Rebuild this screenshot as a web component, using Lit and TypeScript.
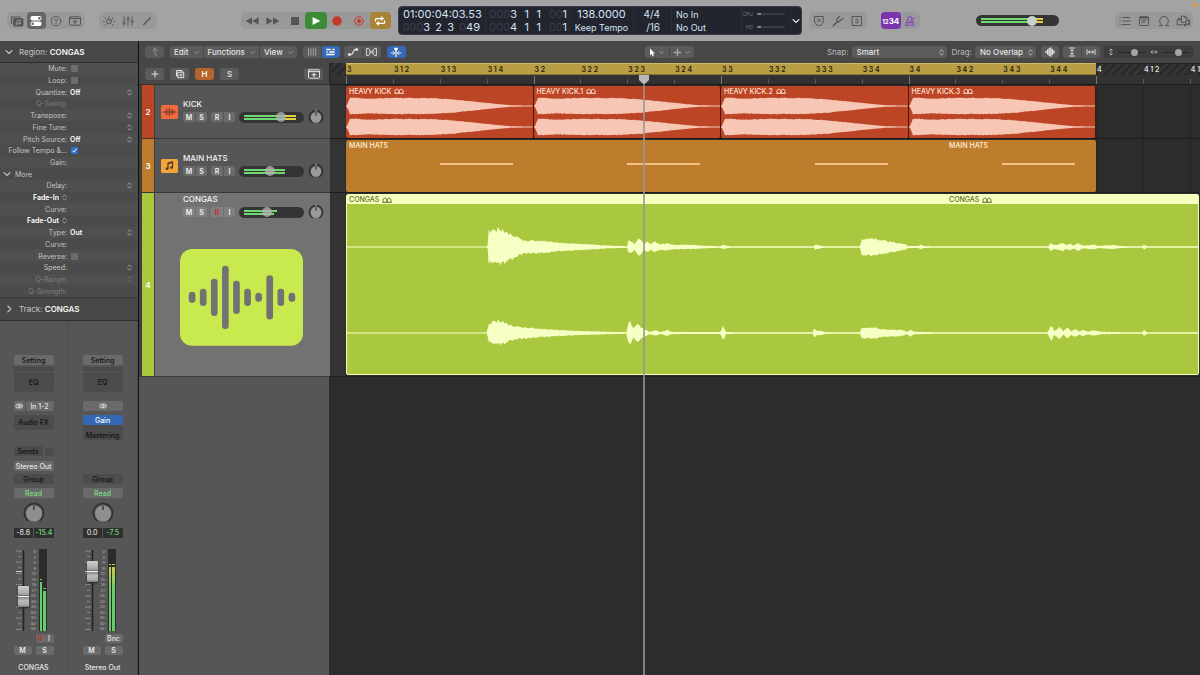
import { LitElement, html, css, svg, nothing } from "lit";
import { customElement, property } from "lit/decorators.js";
import { styleMap } from "lit/directives/style-map.js";
import { classMap } from "lit/directives/class-map.js";

type Point = [number, number];

const icon = (w: number, h: number, body: unknown) => html`<svg
  width=${w} height=${h} viewBox="0 0 ${w} ${h}" fill="none" stroke="currentColor"
  stroke-width="1" stroke-linecap="round" stroke-linejoin="round" aria-hidden="true">${body}</svg>`;

const icons = {
  library: () => icon(14, 12, svg`<path d="M1.500 8.500V2h9" stroke-width="1.200"/><rect x="3.500" y="3.500" width="9.500" height="7.500" rx="1" fill="currentColor"/><path d="M7.200 9V5.600l3-.7v3.400" stroke="#999"/><circle cx="6.500" cy="9" r=".8" fill="#999" stroke="#999" stroke-width=".5"/><circle cx="9.500" cy="8.400" r=".8" fill="#999" stroke="#999" stroke-width=".5"/>`),
  inspector: () => icon(14, 12, svg`<rect x="1.500" y="1" width="11" height="4.500" rx="2" fill="#fff" stroke="none"/><rect x="1.500" y="6.500" width="11" height="4.500" rx="2" fill="#fff" stroke="none"/><circle cx="10.300" cy="3.250" r="1.300" fill="#666" stroke="none"/><circle cx="3.700" cy="8.750" r="1.300" fill="#666" stroke="none"/>`),
  help: () => icon(12, 12, svg`<circle cx="6" cy="6" r="4.800" stroke-width=".9"/><path d="M4.700 5c0-1.800 2.700-1.700 2.700 0 0 1-1.400 1-1.400 2" stroke-width=".9"/><circle cx="6" cy="8.600" r=".6" fill="currentColor" stroke="none"/>`),
  trayPlus: () => icon(14, 12, svg`<rect x="1.500" y="1.800" width="11" height="8.400" rx=".8"/><path d="M1.500 3.600h11"/><path d="M7 5v3.600M5.200 6.800h3.600" stroke-width="1.100"/>`),
  smart: () => icon(14, 12, svg`<circle cx="7" cy="6.300" r="2.600"/><path d="M7 6.300V4.500" /><path d="M7 1.200v.3M3.200 2.800l.2.200M10.800 2.800l-.2.200M1.700 6.300h.3M12.300 6.300H12M3.200 10l.2-.2M10.800 10l-.2-.2" stroke-width="1.200"/>`),
  mixer: () => icon(12, 12, svg`<path d="M2 1.500v9M6 1.500v9M10 1.500v9" stroke-width=".9"/><circle cx="2" cy="7.800" r="1.100" fill="#999" stroke-width=".8"/><circle cx="6" cy="4" r="1.100" fill="#999" stroke-width=".8"/><circle cx="10" cy="6.500" r="1.100" fill="#999" stroke-width=".8"/>`),
  pencil: () => icon(12, 12, svg`<path d="M3 9.300l5.200-5.200 1-1" stroke-width="1.400"/><path d="M2.200 10l.9-.8" stroke-width=".8"/>`),
  rewind: () => icon(14, 10, svg`<path d="M7 1.200L.6 5 7 8.800zM13.600 1.200L7.200 5l6.400 3.800z" fill="currentColor" stroke="none"/>`),
  forward: () => icon(14, 10, svg`<path d="M7 1.200L13.400 5 7 8.800zM.4 1.200L6.800 5 .4 8.800z" fill="currentColor" stroke="none"/>`),
  stop: () => icon(10, 10, svg`<rect x="1" y="1" width="8" height="8" fill="currentColor" stroke="none"/>`),
  play: () => icon(10, 10, svg`<path d="M1.600 1v8L9.300 5z" fill="#fff" stroke="none"/>`),
  record: () => icon(10, 10, svg`<circle cx="5" cy="5" r="4.700" fill="#c5392d" stroke="none"/>`),
  capture: () => icon(10, 10, svg`<circle cx="5" cy="5" r="4.300" stroke="#c5392d"/><circle cx="5" cy="5" r="2.200" fill="#c5392d" stroke="none"/>`),
  cycle: () => icon(12, 10, svg`<g stroke="#fff" stroke-width="1.300"><path d="M1.500 5V3.600c0-.7.400-1 1-1H8M10.500 5v1.400c0 .7-.400 1-1 1H4"/><path d="M7.600.8L9.800 2.600 7.600 4.400zM4.400 5.600L2.200 7.400l2.200 1.800z" fill="#fff" stroke-width=".6"/></g>`),
  shield: () => icon(12, 12, svg`<path d="M1.800 1.500h8.400v5.700L8 10.400H4L1.800 7.200z"/><path d="M4.500 3.900l3 3M7.500 3.900l-3 3"/>`),
  fork: () => icon(12, 12, svg`<path d="M1.200 10.800L5.200 7" stroke-width="1.500"/><path d="M7.500 1.500L5 4.200c-.9 1 .1 3.300 2 2.600L10.800 3.500" stroke-width="1.200"/>`),
  solo: () => icon(12, 12, svg`<rect x="1.500" y="1.500" width="9" height="9"/><path d="M7.600 4.400C7 3.400 4.600 3.500 4.600 4.800c0 1.400 3 .8 3 2.200 0 1.300-2.500 1.400-3.100.4" stroke-width=".9"/>`),
  metronome: () => icon(12, 12, svg`<path d="M4.700 1.800h2.300l3 8.400H1.700zM2.700 7.600h6.300M5.400 7.400L10.200 3" stroke-width="1.100"/>`),
  list: () => icon(12, 12, svg`<path d="M3.600 2.500H11M3.600 6H11M3.600 9.500H11M1 2.500h.3M1 6h.3M1 9.500h.3"/>`),
  note: () => icon(12, 12, svg`<rect x="1.500" y="1.800" width="9" height="8.700" rx="1"/><path d="M3.500 5.200h5M3.500 7.200h3.500"/><path d="M2 2.600h8" stroke-width="1.600"/>`),
  loop: () => icon(12, 12, svg`<path d="M1 10.600h3.600C2.600 9.500 1.700 7.700 1.700 5.800a4.300 4.300 0 018.600 0c0 1.900-.9 3.700-2.900 4.800H11"/>`),
  media: () => icon(15, 12, svg`<path d="M7 9.800H1.200v-5h4M2.500 4.800V3.300h2.500M5.400 7.500V1.200H9l2 1.800v1M5.400 7.500H8M9 1.500V3h2"/><path d="M9.800 9.800V5.800l3.600-.8v4" stroke-width="1.200"/><circle cx="9" cy="10" r="1" fill="currentColor" stroke-width=".6"/><circle cx="12.600" cy="9.200" r="1" fill="currentColor" stroke-width=".6"/>`),
  up: () => icon(10, 10, svg`<path d="M3 3.500L5 1.500l2 2M5 1.800v5c0 1 .6 1.600 1.700 1.600" stroke-width=".9"/>`),
  grid: () => icon(10, 8, svg`<path d="M1 1.200h1M3.400 1.200h1M5.800 1.200h1M8.200 1.200h1M1 3.100h1M3.400 3.100h1M5.800 3.100h1M8.200 3.100h1M1 5h1M3.400 5h1M5.800 5h1M8.200 5h1M1 6.900h1M3.400 6.900h1M5.800 6.900h1M8.200 6.900h1" stroke-linecap="butt"/>`),
  regions: () => icon(9, 8, svg`<path d="M.3 1.500h4.500M6.300 1.500h2.400M.3 4h1.400M3.200 4h5.500M.3 6.500h8.400" stroke-width="1.500" stroke-linecap="butt"/>`),
  automation: () => icon(12, 10, svg`<path d="M2.500 7.500h2.300l2.800-5h2.400" stroke-width="1.200"/><circle cx="2.400" cy="7.500" r="1.500" fill="currentColor" stroke="none"/><circle cx="9.600" cy="2.500" r="1.500" fill="currentColor" stroke="none"/>`),
  flex: () => icon(11, 10, svg`<path d="M1 1.500h1.500C4.500 3.500 4.500 6.500 2.500 8.500H1zM10 1.500H8.500C6.500 3.500 6.500 6.500 8.500 8.500H10zM4 3.500l3 3M7 3.500l-3 3" stroke-width=".9"/>`),
  catchHead: () => icon(12, 10, svg`<path d="M6 3.500V9.500" stroke-width="1.200"/><path d="M4.200 .8h3.600v1.700L6 4.200 4.200 2.500z" fill="currentColor" stroke="none"/><path d="M1 6h3.200M7.800 6H11M2.900 4.200L4.600 6 2.900 7.800M9.100 4.200L7.400 6l1.700 1.800" stroke-width=".8"/>`),
  plus: () => icon(10, 10, svg`<path d="M5 2v6M2 5h6"/>`),
  dup: () => icon(10, 10, svg`<path d="M3 7H1.500V1.500H7V3"/><rect x="3.200" y="3.200" width="5.500" height="5.500"/><path d="M6 4.700v2.600M4.700 6h2.600" stroke-width=".9"/>`),
  pointer: () => icon(7, 9, svg`<path d="M1 .5v7l1.700-1.500 1 2.500 1.200-.5-1-2.400H6z" fill="#fff" stroke="none"/>`),
  cross: () => icon(9, 9, svg`<path d="M4.500 1.500v2M4.500 5.500v2M1.500 4.500h2M5.500 4.500h2M4.500 4.500h.01" stroke="#a8a8a8" stroke-width="1.400"/>`),
  down: () => icon(5, 5, svg`<path d="M.8 1.700l1.700 1.700 1.700-1.700" stroke="#aaa" stroke-width=".8"/>`),
  chevDown: () => icon(8, 8, svg`<path d="M1 2.500l3 3 3-3" stroke-width="1.100"/>`),
  chevRight: () => icon(8, 8, svg`<path d="M2.800 1l3 3-3 3" stroke-width="1.100"/>`),
  updown: () => icon(5, 7, svg`<path d="M.9 2.500L2.500.9l1.600 1.600M.9 4.500l1.600 1.600 1.600-1.600" stroke-width=".8"/>`),
  wave: () => icon(10, 10, svg`<path d="M1 4.500v1M2.600 3v4M4.200 1.500v7M5.800 .8v8.400M7.400 2.500v5M9 4v2" stroke-width="1.300"/>`),
  fitV: () => icon(8, 10, svg`<path d="M1.500 1h5M1.500 9h5M4 2.500v5M2.700 3.800L4 2.400l1.300 1.400M2.700 6.200L4 7.600l1.300-1.400" stroke-width=".9"/>`),
  fitH: () => icon(10, 8, svg`<path d="M1 1.500v5M9 1.500v5M2.500 4h5M3.800 2.700L2.400 4l1.400 1.300M6.200 2.700L7.600 4 6.200 5.300" stroke-width=".9"/>`),
  arrowsV: () => icon(6, 8, svg`<path d="M3 1v6M1.600 2.400L3 1l1.400 1.400M1.600 5.600L3 7l1.400-1.400" stroke="#aaa" stroke-width=".9"/>`),
  arrowsH: () => icon(8, 6, svg`<path d="M1 3h6M2.400 1.600L1 3l1.400 1.400M5.600 1.600L7 3 5.600 4.400" stroke="#aaa" stroke-width=".9"/>`),
  loops: () => icon(10, 6, svg`<path d="M.5 5.300h9M1.900 5.200a2.100 2.100 0 112 0M6.100 5.200a2.100 2.100 0 112 0" stroke-width=".9"/>`),
  stereo: () => icon(8, 6, svg`<circle cx="2.900" cy="3" r="2.100" stroke-width=".8"/><circle cx="5.100" cy="3" r="2.100" stroke-width=".8"/>`),
  knob: () => icon(22, 22, svg`<path d="M5 18.500a9.600 9.600 0 1112 0" stroke="#303030" stroke-width="1.500"/><circle cx="11" cy="11.500" r="8" fill="#8f8f8f" stroke="none"/><path d="M11 4.500v3" stroke="#222" stroke-width="1.200"/>`),
  pan: () => icon(16, 16, svg`<path d="M4.200 13.500a6.600 6.600 0 117.600 0" stroke="#303030" stroke-width="1.500"/><circle cx="8" cy="8.500" r="5.200" fill="#9a9a9a" stroke="none"/><path d="M8 3.800v2.500" stroke="#222" stroke-width="1"/><path d="M8 .8v1.400" stroke="#7bd87e" stroke-width="1"/>`),
  kick: () => icon(17, 14, svg`<rect width="17" height="14" rx="1.500" fill="#f0693f" stroke="none"/><path d="M2 7h13M4 6v2M5.500 4v6M7 5v4M8.500 3v8M10 5.500v3M11.500 4.500v5M13 6v2" stroke="#83412c"/>`),
  hats: () => icon(17, 14, svg`<rect width="17" height="14" rx="1.500" fill="#f5a43c" stroke="none"/><path d="M7 9.500V4l4.500-1.200v5.500M7 4.600l4.500-1.200" stroke="#4c3820" stroke-width="1.200"/><circle cx="6" cy="9.700" r="1.300" fill="#4c3820" stroke="none"/><circle cx="10.500" cy="8.600" r="1.300" fill="#4c3820" stroke="none"/>`),
  congas: () => svg`<svg class="art" viewBox="0 0 122 96" aria-hidden="true"><rect width="122" height="96" rx="12" fill="#c9ea4e"/>${[[12, 11], [23, 17], [34, 37], [45, 63], [56, 33], [67, 17], [78, 9], [89, 44], [100, 17], [111, 9]].map(([x, h]) => svg`<rect x=${x - 3.3} y=${48 - h / 2} width="6.600" height=${h} rx="3.300" fill="#727272"/>`)}</svg>`,
};

/** Outline of a mirrored waveform: the envelope is interpolated and roughened per pixel. */
function wavePath(points: Point[], mid: number, rough: number): string {
  const top: string[] = [];
  const bottom: string[] = [];
  let k = 0;
  const end = points[points.length - 1][0];
  for (let x = 0; x <= end; x++) {
    while (k < points.length - 2 && points[k + 1][0] < x) k++;
    const [x0, a0] = points[k];
    const [x1, a1] = points[k + 1];
    const a = a0 + ((a1 - a0) * (x - x0)) / (x1 - x0 || 1);
    const n = Math.abs(Math.sin(x * 12.9898) * 43758.5453) % 1;
    const m = Math.abs(Math.sin(x * 78.233) * 12543.123) % 1;
    const loud = a > 1.2 ? a : Math.max(a, 0.6);
    const r = a > 1.2 ? rough : 0.1;
    top.push(`${x} ${(mid - loud * (1 - r * n)).toFixed(2)}`);
    bottom.unshift(`${x} ${(mid + loud * (1 - r * m)).toFixed(2)}`);
  }
  return `M${top.join("L")}L${bottom.join("L")}Z`;
}

const KICK: Point[] = [[0, 0.5], [1, 1], [4, 8.6], [8, 8.6], [20, 7.8], [45, 8.4], [85, 8.4], [105, 7.2], [125, 5], [145, 2.800], [165, 0.8], [187, 0.5]];
const CONGA_L: Point[] = [[0, 0.6], [140, 0.6], [141, 2], [142, 17], [146, 18], [153, 20], [161, 16], [170, 11], [178, 7], [195, 7], [215, 4.5], [240, 3.2], [262, 1.6], [280, 0.9], [281, 1], [282, 7], [286, 6], [288, 3], [292, 9], [295, 8], [297, 3], [299, 5], [302, 6], [304, 3], [308, 6], [314, 3], [320, 4], [328, 2.6], [345, 2.4], [360, 1.3], [374, 0.8], [377, 2.4], [381, 1.2], [385, 0.8], [468, 0.7], [469, 2.8], [474, 1.6], [478, 0.8], [514, 0.7], [516, 9], [524, 10], [530, 9], [545, 6], [560, 3], [562, 1.2], [573, 1], [575, 2.8], [578, 1], [600, 0.7], [703, 0.7], [705, 4.4], [709, 2], [718, 4.5], [721, 2], [725, 3.8], [728, 1.6], [733, 4.5], [737, 1.6], [749, 2.6], [753, 1.2], [768, 2.3], [775, 1], [797, 0.8], [799, 2.8], [802, 0.7], [853, 0.7]];
const CONGA_R: Point[] = [[0, 0.6], [140, 0.6], [142, 9], [147, 13], [156, 13], [163, 9], [170, 7], [190, 5], [210, 3.6], [230, 2.4], [255, 1.6], [280, 0.8], [282, 11], [284, 13], [287, 5], [291, 10], [296, 5], [299, 4], [303, 1.4], [310, 3], [314, 1], [321, 3.2], [325, 1.4], [345, 1], [374, 1], [377, 8], [380, 1.3], [390, 0.8], [467, 0.8], [468, 5], [471, 2.4], [475, 2.6], [480, 0.9], [514, 0.8], [516, 6], [531, 6], [537, 4], [556, 3.6], [561, 1.3], [565, 4], [568, 1.5], [590, 0.8], [702, 0.8], [706, 8.5], [709, 2], [714, 7], [718, 2], [722, 6], [726, 2], [730, 4.5], [734, 1.6], [738, 3.6], [743, 1.5], [748, 3], [757, 1.4], [780, 0.7], [797, 0.8], [799, 3.5], [802, 0.8], [853, 0.8]];

const base = css`
  *, *::before, *::after { box-sizing: border-box; }
  button, input, select { font: inherit; color: inherit; margin: 0; padding: 0; border: 0; background: none; letter-spacing: inherit; }
  button { display: flex; align-items: center; justify-content: center; white-space: nowrap; }
  select { appearance: none; }
  svg { display: block; flex: none; }
  .pop { display: grid; align-items: center; }
  .pop > select, .pop > svg { grid-area: 1 / 1; }
  .pop > svg { justify-self: end; pointer-events: none; }
  .pop > select { width: 100%; }
`;

@customElement("level-slider")
class LevelSlider extends LitElement {
  @property() label = "";
  @property({ type: Number }) value = 50;
  @property({ attribute: false }) levels: number[] = [];
  @property({ attribute: false }) hot = 100;

  static styles = [base, css`
    :host { display: grid; height: 11px; border-radius: 6px; background: #343434; align-items: center; }
    .meter, input { grid-area: 1 / 1; }
    .meter { display: grid; gap: 1px; padding: 0 5px; }
    .bar { height: 2px; background: #e6cf3e; }
    .fill { height: 2px; background: #6fd774; }
    input { appearance: none; width: 100%; height: 10px; z-index: 1; }
    input::-webkit-slider-thumb { appearance: none; width: 10px; height: 10px; border-radius: 50%; background: var(--thumb, rgba(180, 180, 180, 0.75)); }
  `];

  render() {
    return html`
      <div class="meter">
        ${this.levels.map((l) => html`<div class="bar" style=${styleMap({ width: `${l}%` })}>
          <div class="fill" style=${styleMap({ width: `${Math.min(100, this.hot)}%` })}></div></div>`)}
      </div>
      <input type="range" min="0" max="100" .value=${String(this.value)} aria-label=${this.label} />`;
  }
}

@customElement("top-bar")
class TopBar extends LitElement {
  static styles = [base, css`
    :host { position: relative; display: flex; align-items: center; height: 41px; padding: 0 7px; background: #a3a3a3; color: #555; }
    .group { display: flex; flex: none; border-radius: 5px; background: #999; }
    .group button { flex: 1; min-width: 0; height: 17px; border-radius: 4px; }
    .g2 { width: 39px; } .g3 { width: 58px; } .g4 { width: 78px; } .g7 { width: 150px; }
    .on { background: #666; color: #fff; }
    .play { background: #3d8b37; }
    .cycle { background: #a98336; }
    .count { background: #7a35ad; color: #fff; font-size: 8px; font-weight: 700; }
    .metro { color: #8b45bd; }
    .s1 { width: 14px; } .s2 { flex: 3; } .s3 { flex: 2; } .s4 { width: 7px; }
    .lcd { display: grid; grid-template-columns: 87px 84px 64px 38px 70px 49px 10px; height: 29px; border-radius: 4px; background: #22242e; color: #d5e2f4; font-size: 11px; border: 1px solid #3a3c46; }
    .cell { display: flex; flex-direction: column; justify-content: center; border-right: 1px solid #2b2d38; }
    .cell > div { height: 13px; line-height: 13px; }
    .time { padding-left: 4px; }
    .pos { display: grid; grid-template-columns: 27px 12px 12px 26px; justify-items: end; }
    .dim { color: #3b3e4a; }
    .mid { text-align: center; }
    .sm { font-size: 9px; }
    .io { padding-left: 4px; font-size: 9px; }
    .io.sig { padding: 0 11px 0 0; text-align: right; font-size: 10px; }
    .load { display: flex; align-items: center; justify-content: end; gap: 4px; padding-right: 5px; font-size: 5px; color: #6d717c; }
    .load i { width: 28px; height: 2px; background: #3a3d48; border-left: 4px solid #7d8490; border-radius: 1px; }
    .more { display: flex; align-items: center; justify-content: center; }
    level-slider { width: 83px; --thumb: #c9cfca; }
    .dot { position: absolute; top: 3px; right: 3px; width: 4px; height: 4px; border-radius: 50%; background: #ea9a2c; }
    .small { font-size: 6px; }
  `];

  btn(label: string, body: unknown, cls = "") {
    return html`<button class=${cls} aria-label=${label}>${body}</button>`;
  }

  render() {
    const dim = (s: string) => html`<span class="dim">${s}</span>`;
    return html`
      <div class="group g4">
        ${this.btn("Library", icons.library())}${this.btn("Inspector", icons.inspector(), "on")}
        ${this.btn("Quick Help", icons.help())}${this.btn("Toolbar", icons.trayPlus())}
      </div>
      <div class="s1"></div>
      <div class="group g3">
        ${this.btn("Smart Controls", icons.smart())}${this.btn("Mixer", icons.mixer())}${this.btn("Editors", icons.pencil())}
      </div>
      <div class="s2"></div>
      <div class="group g7">
        ${this.btn("Rewind", icons.rewind())}${this.btn("Forward", icons.forward())}${this.btn("Stop", icons.stop())}
        ${this.btn("Play", icons.play(), "play")}${this.btn("Record", icons.record())}
        ${this.btn("Capture", icons.capture())}${this.btn("Cycle", icons.cycle(), "cycle")}
      </div>
      <div class="s4"></div>
      <div class="lcd">
        <div class="cell time"><div>01:00:04:03.53</div><div class="pos"><span>${dim("000")}3</span><span>2</span><span>3</span><span>${dim("0")}49</span></div></div>
        <div class="cell time">
          <div class="pos"><span>${dim("000")}3</span><span>1</span><span>1</span><span>${dim("00")}1</span></div>
          <div class="pos"><span>${dim("000")}4</span><span>1</span><span>1</span><span>${dim("00")}1</span></div>
        </div>
        <div class="cell mid"><div>138.0000</div><div class="sm">Keep Tempo</div></div>
        <div class="cell io sig"><div>4/4</div><div>/16</div></div>
        <div class="cell io"><div>No In</div><div>No Out</div></div>
        <div class="cell"><div class="load">CPU <i></i></div><div class="load">HD <i></i></div></div>
        <button class="more" aria-label="Display mode">${icons.chevDown()}</button>
      </div>
      <div class="s4"></div>
      <div class="group g3">
        ${this.btn("Replace", icons.shield())}${this.btn("Tuner", icons.fork())}${this.btn("Solo", icons.solo())}
      </div>
      <div class="s1"></div>
      <div class="group g2">
        ${this.btn("Count In", html`<span><span class="small">12</span>34</span>`, "count")}${this.btn("Metronome", icons.metronome(), "metro")}
      </div>
      <div class="s3"></div>
      <level-slider label="Master volume" .value=${70} .levels=${[85, 85]} .hot=${84}></level-slider>
      <div class="s3"></div>
      <div class="group g4">
        ${this.btn("List Editors", icons.list())}${this.btn("Note Pads", icons.note())}${this.btn("Loop Browser", icons.loop())}${this.btn("Browsers", icons.media())}
      </div>
      <div class="dot"></div>`;
  }
}

type Kind = "check" | "checked" | "menu" | "field" | "plain" | "head" | "more";
const PARAMS: { name: string; kind: Kind; value?: string; off?: boolean }[] = [
  { name: "Mute:", kind: "check" },
  { name: "Loop:", kind: "check" },
  { name: "Quantize:", kind: "menu", value: "Off" },
  { name: "Q-Swing:", kind: "plain", off: true },
  { name: "Transpose:", kind: "field" },
  { name: "Fine Tune:", kind: "field" },
  { name: "Pitch Source:", kind: "menu", value: "Off" },
  { name: "Follow Tempo &...", kind: "checked" },
  { name: "Gain:", kind: "plain" },
  { name: "More", kind: "more" },
  { name: "Delay:", kind: "field" },
  { name: "Fade-In", kind: "head" },
  { name: "Curve:", kind: "plain" },
  { name: "Fade-Out", kind: "head" },
  { name: "Type:", kind: "menu", value: "Out" },
  { name: "Curve:", kind: "plain" },
  { name: "Reverse:", kind: "check" },
  { name: "Speed:", kind: "field" },
  { name: "Q-Range:", kind: "field", off: true },
  { name: "Q-Strength:", kind: "plain", off: true },
];

@customElement("inspector-panel")
class InspectorPanel extends LitElement {
  static styles = [base, css`
    :host { display: flex; flex-direction: column; background: #4b4b4b; color: #c4c4c4; font-size: 7px; }
    .title { display: flex; align-items: center; justify-content: flex-start; gap: 6px; width: 100%; height: 22px; padding: 0 5px; background: #474747; font-size: 8px; border-bottom: 1px solid #2c2c2c; }
    .title.track { border-top: 1px solid #3a3a3a; height: 24px; }
    .title b { font-weight: 600; color: #f4f4f4; }
    .rows { display: grid; grid-auto-rows: 1fr; height: 234px; }
    .row { display: grid; grid-template-columns: 67px 1fr; column-gap: 3px; align-items: center; padding-right: 6px; }
    .row:nth-child(odd) { background: #4f4f4f; }
    .row > label { text-align: right; white-space: nowrap; }
    .off { color: #7d7d7d; }
    .ctl { color: #fff; font-weight: 600; }
    .row svg { color: #bbb; }
    .off svg { color: #777; }
    .head { color: #fff; font-weight: 600; justify-self: end; }
    .head select { padding-right: 8px; }
    .more { display: flex; gap: 4px; padding-left: 3px; justify-content: flex-start; }
    .field { display: flex; align-items: center; justify-content: space-between; }
    .field input { width: 40px; height: 9px; }
    .box { appearance: none; display: block; width: 7px; height: 7px; border-radius: 1px; background: #6c6c6c; margin-left: 1px; }
    .box:checked { background: #2f6fcb url("data:image/svg+xml,%3Csvg xmlns='http://www.w3.org/2000/svg' viewBox='0 0 7 7'%3E%3Cpath d='M1.500 3.700l1.400 1.500 2.500-3.600' fill='none' stroke='white'/%3E%3C/svg%3E"); }
    .strips { flex: 1; display: grid; grid-template-columns: 1fr 1fr; background: #565656; }
    channel-strip { border-right: 1px solid #4c4c4c; }
  `];

  row(p: (typeof PARAMS)[number], i: number) {
    const id = `p${i}`;
    if (p.kind === "more") return html`<button class="row more">${icons.chevDown()} More</button>`;
    if (p.kind === "head")
      return html`<div class="row"><span class="pop head"><select aria-label=${p.name}><option>${p.name}</option></select>${icons.updown()}</span></div>`;
    return html`<div class=${classMap({ row: true, off: !!p.off })}>
      <label for=${id}>${p.name}</label>
      <div class="ctl">
        ${p.kind === "check" || p.kind === "checked"
          ? html`<input id=${id} class="box" type="checkbox" ?checked=${p.kind === "checked"} />`
          : p.kind === "menu"
            ? html`<span class="pop"><select id=${id}><option>${p.value}</option></select>${icons.updown()}</span>`
            : html`<span class="field"><input id=${id} type="text" ?disabled=${!!p.off} />${p.kind === "field" ? icons.updown() : nothing}</span>`}
      </div>
    </div>`;
  }

  render() {
    return html`
      <button class="title">${icons.chevDown()}<span>Region: <b>CONGAS</b></span></button>
      <div class="rows">${PARAMS.map((p, i) => this.row(p, i))}</div>
      <button class="title track">${icons.chevRight()}<span>Track: <b>CONGAS</b></span></button>
      <div class="strips">
        <channel-strip name="CONGAS" level="-8.6" peak="-15.4" .fader=${40} .bars=${[63, 53]} input armed></channel-strip>
        <channel-strip name="Stereo Out" level="0.0" peak="-7.5" .fader=${80} .bars=${[82, 82]}></channel-strip>
      </div>`;
  }
}

const SCALE = [0, 3, 6, 9, 12, 15, 18, 21, 24, 30, 35, 40, 45, 50, 60];

@customElement("channel-strip")
class ChannelStrip extends LitElement {
  @property() name = "";
  @property() level = "";
  @property() peak = "";
  @property({ type: Number }) fader = 50;
  @property({ attribute: false }) bars: number[] = [];
  @property({ type: Boolean }) input = false;

  static styles = [base, css`
    :host { display: flex; flex-direction: column; justify-content: flex-end; align-items: center; padding: 0 1px 1px 0; font-size: 7px; font-weight: 500; color: #e6e6e6; }
    .col { width: 40px; display: flex; flex-direction: column; }
    button { height: 10px; border-radius: 2px; background: #6a6a6a; width: 100%; }
    .dark { background: #4c4c4c; color: #111; }
    .set { color: #111; }
    .gr { height: 4px; margin-top: 2px; background: #4c4c4c; border: 1px solid #474747; }
    .eq { height: 20px; margin-top: 1px; }
    .in { display: flex; gap: 1px; margin-top: 9px; }
    .in button { flex: 1; }
    .in .pic { flex: 0 0 11px; }
    .fx { height: 31px; margin-top: 4px; }
    .fx .dark { height: 15px; }
    .fx .gain + .dark { padding-top: 5px; }
    .gain { background: #3468b4; color: #fff; }
    .sends { display: flex; gap: 2px; height: 10px; align-items: center; }
    .sends .dark { width: 29px; }
    .sends .round { width: 9px; height: 9px; border-radius: 50%; }
    .out { margin-top: 5px; height: 10px; }
    .grp { margin-top: 3px; }
    .read { margin-top: 4px; color: #7bdd80; }
    .knob { margin: 4px auto 0; height: 22px; }
    .vals { display: flex; gap: 1px; margin-top: 4px; }
    .vals output { flex: 1; height: 10px; line-height: 10px; text-align: center; background: #2f2f2f; color: #ddd; }
    .vals output:last-child { color: #6fd774; }
    .fader { display: grid; grid-template-columns: 15px 10px 8px; height: 82px; margin-top: 11px; }
    .slot { display: grid; justify-items: end; }
    .slot svg, .slot input { grid-area: 1 / 1; }
    .slot input { appearance: none; writing-mode: vertical-lr; direction: rtl; width: 11px; height: 82px; z-index: 1; }
    .slot input::-webkit-slider-thumb { appearance: none; width: 11px; height: 21px; border-radius: 1px; box-shadow: 0 1px 2px #222;
      background: linear-gradient(#d0d0d0, #a2a2a2 40%, #6b6b6b 46%, #f4f4f4 50%, #8a8a8a 55%, #bdbdbd 70%, #aaa 90%, #777); }
    .nums { display: flex; flex-direction: column; justify-content: space-between; align-items: flex-end; padding-right: 1px; font-size: 4px; line-height: 5px; color: #b5b5b5; font-weight: 400; }
    .meter { display: grid; grid-template-columns: 1fr 1fr; gap: 1px; padding: 0 1px; align-items: end; background: #2b2b2b; }
    .lvl { background: #66cc6b; }
    .lvl.hot { background: linear-gradient(#dcc64a, #b7cf50 8px, #66cc6b 24px); }
    .lvl::before { content: ""; display: block; height: 3px; background: #2b2b2b; border-top: 1px solid #66cc6b; }
    .lvl.hot::before { border-color: #dcc64a; }
    .ri { display: flex; justify-content: flex-end; height: 9px; margin-top: 3px; }
    .ri button { width: 9px; height: 9px; }
    .ri .bnc { width: 18px; }
    .ri .r { color: #c03028; }
    .ms { display: grid; grid-template-columns: 18px 18px; justify-content: space-between; margin-top: 3px; }
    .ms button { height: 9px; font-weight: 600; }
    .name { height: 12px; line-height: 12px; margin-top: 7px; text-align: center; white-space: nowrap; }
  `];

  render() {
    return html`<div class="col">
      <button class="set">Setting</button>
      <div class="gr"></div>
      <button class="dark eq">EQ</button>
      <div class="in"><button class=${this.input ? "pic" : ""} aria-label="Format">${icons.stereo()}</button>${this.input ? html`<button>In 1-2</button>` : nothing}</div>
      <div class="fx">${this.input ? html`<button class="dark">Audio FX</button>` : html`<button class="gain">Gain</button><button class="dark">Mastering</button>`}</div>
      <div class="sends">${this.input ? html`<button class="dark">Sends</button><button class="dark round" aria-label="Send level"></button>` : nothing}</div>
      <div class="out">${this.input ? html`<button>Stereo Out</button>` : nothing}</div>
      <button class="dark grp">Group</button>
      <button class="read">Read</button>
      <div class="knob">${icons.knob()}</div>
      <div class="vals"><output>${this.level}</output><output>${this.peak}</output></div>
      <div class="fader">
        <div class="slot">
          <svg width="15" height="82" viewBox="0 0 15 82" stroke="#a0a0a0" stroke-width=".7" aria-hidden="true">
            <path d="M9.500 1v81" stroke="#222" stroke-width="1.500" />
            <path d=${SCALE.map((_, i) => `M${i % 2 ? 4 : 2} ${2 + i * 5.6}h${i % 2 ? 3 : 6}`).join("")} />
            <path d="M2 22.500h6" stroke="#fff" />
          </svg>
          <input type="range" min="0" max="100" .value=${String(this.fader)} aria-label="${this.name} fader" />
        </div>
        <div class="nums">${SCALE.map((n) => html`<span>${n}-</span>`)}</div>
        <div class="meter">${this.bars.map((b) => html`<div class=${classMap({ lvl: true, hot: b > 75 })} style=${styleMap({ height: `${b}%` })}></div>`)}</div>
      </div>
      <div class="ri">${this.input ? html`<button class="r">R</button><button>I</button>` : html`<button class="bnc">Bnc</button>`}</div>
      <div class="ms"><button>M</button><button>S</button></div>
      <div class="name">${this.name}</div>
    </div>`;
  }
}

@customElement("track-header")
class TrackHeader extends LitElement {
  @property() name = "";
  @property() number = "";
  @property() tone = "kick";
  @property({ type: Number }) volume = 50;
  @property({ attribute: false }) levels: number[] = [];
  @property({ type: Number }) hot = 100;
  @property({ type: Boolean, reflect: true }) selected = false;

  static styles = [base, css`
    :host { display: grid; grid-template-columns: 12px 1fr; column-gap: 1px; padding-left: 3px; background: #3f3f3f; border-bottom: 1px solid #3a3a3a; font-size: 7px; }
    .num { display: grid; place-items: center; color: #fff; font-weight: 600; font-size: 8px; }
    .kick { background: #bb4525; } .hats { background: #bd7d2c; } .congas { background: #a9c83e; }
    .body { display: grid; grid-template-columns: 22px 1fr; padding: 0 6px 0 6px; background: #565656; align-content: center; align-items: center; }
    :host([selected]) .body { background: #727272; align-content: start; padding-top: 1px; }
    .name { font-size: 8px; font-weight: 500; color: #f2f2f2; line-height: 11px; height: 11px; }
    .info { display: flex; flex-direction: column; }
    .ctl { display: flex; align-items: center; height: 14px; }
    .pair { display: flex; gap: 1px; margin-right: 4px; }
    button { width: 12px; height: 10px; background: #6b6b6b; color: #f0f0f0; font-weight: 600; }
    .pair button:first-child { border-radius: 2px 0 0 2px; }
    .pair button:last-child { border-radius: 0 2px 2px 0; width: 11px; }
    :host([selected]) button { background: #808080; }
    :host([selected]) .r { color: #c02a20; }
    level-slider { width: 65px; margin-right: 4px; }
    .art { grid-column: 1 / -1; width: 123px; margin: 30px 0 0 19px; }
  `];

  render() {
    const pic = this.tone === "kick" ? icons.kick() : this.tone === "hats" ? icons.hats() : nothing;
    return html`
      <div class="num ${this.tone}">${this.number}</div>
      <div class="body">
        <span>${pic}</span>
        <div class="info">
          <div class="name">${this.name}</div>
          <div class="ctl">
            <div class="pair"><button>M</button><button>S</button></div>
            <div class="pair"><button class="r">R</button><button>I</button></div>
            <level-slider label="${this.name} volume" .value=${this.volume} .levels=${this.levels} .hot=${this.hot}></level-slider>
            ${icons.pan()}
          </div>
        </div>
        ${this.selected ? html`${icons.congas()}` : nothing}
      </div>`;
  }
}

@customElement("arrange-area")
class ArrangeArea extends LitElement {
  static styles = [base, css`
    :host { display: flex; flex-direction: column; min-width: 0; background: #2c2c2c; color: #e4e4e4; font-size: 8px; font-weight: 500; }
    .tools { display: flex; align-items: center; height: 22px; padding: 0 6px; background: #474747; }
    .set { display: flex; gap: 1px; border-radius: 3px; overflow: hidden; margin-right: 6px; }
    .tools button { height: 12px; background: #5b5b5b; }
    .sq button { width: 18px; }
    .one button { width: 19px; }
    .dim button { color: #999; }
    .tools .menus button { padding: 0 4px; gap: 5px; }
    .tools .blue { background: #3568b5; color: #fff; }
    .tools .ptr button { width: 24px; gap: 3px; }
    .tools .ptr { margin: 0; }
    .tools .last { margin-right: 4px; }
    .f7 { flex: 7; } .f4 { flex: 4; }
    .tools label { color: #bbb; margin-right: 3px; font-weight: 400; }
    .tools .pop { height: 12px; border-radius: 3px; background: #5b5b5b; margin-right: 5px; padding: 0 3px 0 5px; }
    .snap { width: 95px; } .drag { width: 61px; }
    .zoom { display: flex; align-items: center; gap: 4px; height: 12px; padding: 0 4px; background: #3d3d3d; border-radius: 3px; }
    .zoom input { appearance: none; width: 28px; height: 8px; background: linear-gradient(#262626, #262626) center / 100% 1px no-repeat; }
    .zoom input::-webkit-slider-thumb { appearance: none; width: 7px; height: 7px; border-radius: 50%; background: #a5a5a5; }
    .work { flex: 1; display: grid; grid-template-columns: 191px 1fr; min-height: 0; }
    .heads { display: flex; flex-direction: column; background: #565656; border-right: 1px solid #2a2a2a; }
    .bar { display: flex; align-items: center; gap: 6px; height: 22px; padding: 0 6px; background: #474747; border-bottom: 1px solid #333; }
    .bar button { width: 19px; height: 12px; border-radius: 3px; background: #5b5b5b; }
    .bar .h { background: #b5652b; color: #fff; font-weight: 600; }
    .bar .new { margin-left: auto; }
    .short { height: 54px; }
    .tall { height: 184px; }
    .time { position: relative; display: flex; flex-direction: column; min-width: 0; overflow: hidden; }
    .ruler { display: flex; height: 22px; color: #ddd; font-size: 7px; font-weight: 600; border-bottom: 1px solid #1c1c1c; background: #323232; }
    .pre { flex: 0 0 16px; height: 12px; }
    .pre, .lab { background: repeating-linear-gradient(135deg, #2a2a2a 0 3px, #353535 3px 6px); }
    .bars { flex: 0 0 750px; display: grid; grid-template-columns: repeat(16, 1fr); }
    .cyc .lab { background: #ba9e45; color: #221c0a; }
    .cellr { display: flex; flex-direction: column; justify-content: space-between; min-width: 0; }
    .lab { height: 12px; line-height: 11px; padding-left: 1px; border-top: 1px solid #1f1f1f; white-space: nowrap; }
    .cyc .lab { border-top-color: #d2b85e; border-bottom: 1px solid #8a7530; }
    .tick { height: 5px; border-left: 1px solid #5a5a5a; }
    .tick.major { height: 8px; border-color: #777; }
    .lane { display: flex; padding-left: 16px; background: linear-gradient(90deg, #333 15px, transparent 15px); border-bottom: 1px solid #1d1d1d; }
    .beats { background-image: linear-gradient(90deg, #333 15px, transparent 15px), repeating-linear-gradient(90deg, transparent 0 46px, #262626 46px 47px); background-position: 0 0, 15px 0; }
    .regions { flex: 0 0 750px; display: grid; grid-template-columns: repeat(4, 1fr); padding: 1px 0 0; }
    .region { border-radius: 2px; overflow: hidden; display: flex; flex-direction: column; min-width: 0; }
    .rt { display: flex; align-items: center; height: 10px; padding-left: 3px; font-size: 7px; white-space: nowrap; flex: none; }
    .rt > span { display: flex; align-items: center; gap: 3px; }
    .rt > .first { flex: 0 0 600px; }
    .red { background: #bb4525; color: #fde3d8; border-right: 1px solid #4a1509; }
    .red .w { fill: #f7c6b5; width: 100%; height: 42px; }
    .org { background: #bd7d2c; color: #fff1dc; grid-column: 1 / -1; }
    .notes { display: grid; grid-template-columns: repeat(4, 1fr); margin-top: 13px; }
    .notes i { width: 39%; height: 2px; margin-left: 50%; background: #f0c183; }
    .grn { flex: 1; margin: 1px 1px 1px 0; background: #aac83f; border: 1px solid #f4fdba; }
    .grn .rt { background: #f5ffc0; color: #5d6b23; height: 9px; padding-left: 2px; }
    .grn .w { fill: #f6ffc4; width: 100%; height: 170px; }
    .playhead { position: absolute; left: 308px; top: 11px; bottom: 0; width: 12px; display: flex; flex-direction: column; align-items: center; color: #b9b9b9; pointer-events: none; }
    .playhead i { flex: 1; width: 2px; background: rgba(150, 150, 150, 0.8); }
  `];

  ruler(bar: number, count: number) {
    return html`<div class="bars ${bar === 3 ? "cyc" : ""}">
      ${Array.from({ length: count }, (_, i) => {
        const beat = Math.floor(i / 4) + 1;
        const div = (i % 4) + 1;
        const text = i === 0 ? `${bar}` : div === 1 ? `${bar} ${beat}` : `${bar} ${beat} ${div}`;
        return html`<div class="cellr"><div class="lab">${text}</div><div class="tick ${div === 1 ? "major" : ""}"></div></div>`;
      })}
    </div>`;
  }

  render() {
    const beyond = Math.max(0, Math.min(16, Math.ceil((window.innerWidth - 1096) / 47)));
    return html`
      <div class="tools">
        <div class="set one dim"><button aria-label="Up">${icons.up()}</button></div>
        <div class="set menus">
          <button>Edit ${icons.down()}</button><button>Functions ${icons.down()}</button><button>View ${icons.down()}</button>
        </div>
        <div class="set sq last"><button aria-label="Live loops">${icons.grid()}</button><button class="blue" aria-label="Tracks">${icons.regions()}</button></div>
        <div class="set sq"><button aria-label="Automation">${icons.automation()}</button><button aria-label="Flex">${icons.flex()}</button></div>
        <div class="set one"><button class="blue" aria-label="Catch playhead">${icons.catchHead()}</button></div>
        <div class="f7"></div>
        <div class="set ptr"><button aria-label="Pointer tool">${icons.pointer()}${icons.down()}</button><button aria-label="Marquee tool">${icons.cross()}${icons.down()}</button></div>
        <div class="f4"></div>
        <label for="snap">Snap:</label>
        <span class="pop snap"><select id="snap"><option>Smart</option></select>${icons.updown()}</span>
        <label for="drag">Drag:</label>
        <span class="pop drag"><select id="drag"><option>No Overlap</option></select>${icons.updown()}</span>
        <div class="set sq last"><button aria-label="Waveform zoom">${icons.wave()}</button></div>
        <div class="set sq last"><button aria-label="Fit vertically">${icons.fitV()}</button><button aria-label="Fit horizontally">${icons.fitH()}</button></div>
        <div class="zoom">${icons.arrowsV()}<input type="range" aria-label="Vertical zoom" value="62" />${icons.arrowsH()}<input type="range" aria-label="Horizontal zoom" value="60" /></div>
      </div>
      <div class="work">
        <div class="heads">
          <div class="bar">
            <button aria-label="Add track">${icons.plus()}</button><button aria-label="Duplicate track">${icons.dup()}</button>
            <button class="h">H</button><button>S</button>
            <button class="new" aria-label="Header settings">${icons.trayPlus()}</button>
          </div>
          <track-header class="short" name="KICK" number="2" tone="kick" volume="67" .levels=${[94, 94]} .hot=${80}></track-header>
          <track-header class="short" name="MAIN HATS" number="3" tone="hats" volume="48" .levels=${[74, 74]}></track-header>
          <track-header class="tall" name="CONGAS" number="4" tone="congas" volume="42" .levels=${[60, 55]} selected></track-header>
        </div>
        <div class="time">
          <div class="ruler"><div class="pre"></div>${this.ruler(3, 16)}${this.ruler(4, beyond)}</div>
          <div class="lane beats short"><div class="regions">
            ${["HEAVY KICK", "HEAVY KICK.1", "HEAVY KICK.2", "HEAVY KICK.3"].map((n) => html`<div class="region red">
              <div class="rt"><span>${n} ${icons.loops()}</span></div>
              <svg class="w" viewBox="0 0 187 42" preserveAspectRatio="none" aria-hidden="true"><path d=${wavePath(KICK, 10, 0.1)} /><path d=${wavePath(KICK, 31, 0.1)} /></svg>
            </div>`)}
          </div></div>
          <div class="lane beats short"><div class="regions"><div class="region org">
            <div class="rt"><span class="first">MAIN HATS</span><span>MAIN HATS</span></div>
            <div class="notes"><i></i><i></i><i></i><i></i></div>
          </div></div></div>
          <div class="lane tall"><div class="region grn">
            <div class="rt"><span class="first">CONGAS ${icons.loops()}</span><span>CONGAS ${icons.loops()}</span></div>
            <svg class="w" viewBox="0 0 853 170" preserveAspectRatio="none" aria-hidden="true"><path d=${wavePath(CONGA_L, 43, 0.25)} /><path d=${wavePath(CONGA_R, 129, 0.25)} /></svg>
          </div></div>
          <div class="playhead">
            <svg width="12" height="11" viewBox="0 0 12 11" aria-hidden="true"><path d="M1 1h10v5L6 10.800 1 6z" fill="currentColor" /></svg><i></i>
          </div>
        </div>
      </div>`;
  }
}

@customElement("app-root")
class AppRoot extends LitElement {
  static styles = css`
    :host { display: flex; flex-direction: column; min-height: 100vh; font-family: Inter, "Liberation Sans", sans-serif; background: #2c2c2c; }
    .main { flex: 1; display: grid; grid-template-columns: 139px minmax(0, 1fr); }
    inspector-panel { border-right: 1px solid #111; }
  `;

  render() {
    return html`<top-bar></top-bar>
      <div class="main"><inspector-panel></inspector-panel><arrange-area></arrange-area></div>`;
  }
}
